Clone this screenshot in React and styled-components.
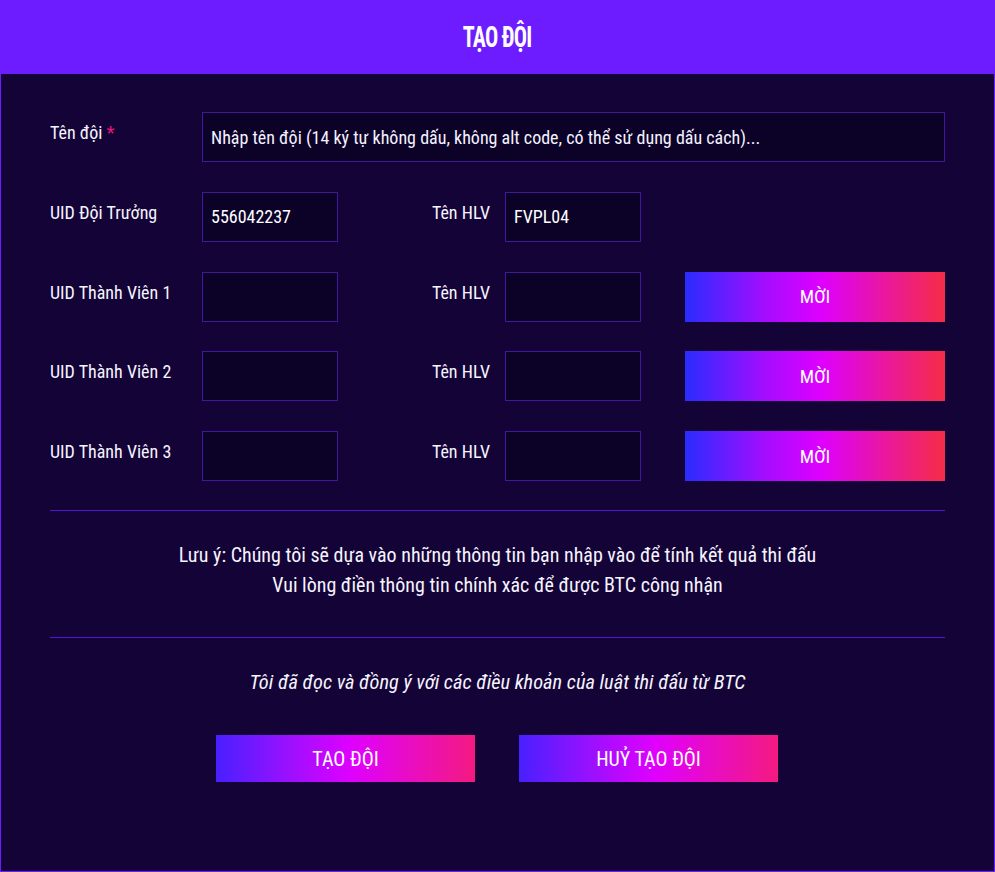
import React from 'react'
import styled, { createGlobalStyle } from 'styled-components'

const GlobalStyle = createGlobalStyle`
  html, body {
    margin: 0;
    padding: 0;
    background: #140336;
  }
  * {
    box-sizing: border-box;
  }
`

const Page = styled.div`
  width: 995px;
  height: 872px;
  border: 1px solid #6c1cff;
  border-top: none;
  background: #140336;
  font-family: "Roboto Condensed", Roboto, "Liberation Sans", sans-serif;
  color: #f6f4ff;
  display: flex;
  flex-direction: column;
`

const Header = styled.header`
  height: 74px;
  margin: 0 -1px;
  background: #6c1cff;
  display: flex;
  align-items: center;
  justify-content: center;
`

const Title = styled.h1`
  margin: 0;
  font-size: 29px;
  font-weight: 700;
  letter-spacing: -1px;
  color: #fff;
  transform: scaleX(0.76);
`

const Form = styled.div`
  padding: 38px 49px 0;
`

const Grid = styled.div`
  display: grid;
  grid-template-columns: 152px 136px 167px 136px 44px 260px;
  grid-auto-rows: 50px;
  row-gap: 29.75px;
`

const Label = styled.label`
  font-size: 18px;
  padding-top: 10px;
  white-space: nowrap;
  justify-self: ${p => (p.$right ? 'end' : 'start')};
  padding-right: ${p => (p.$right ? '15px' : '0')};

  span {
    color: #ec1482;
  }
`

const Input = styled.input`
  grid-column: ${p => p.$span || 'auto'};
  height: 50px;
  width: 100%;
  background: #0c0228;
  border: 1px solid #41179f;
  padding: 0 8px;
  font-family: inherit;
  font-size: 18px;
  color: #fff;
  outline: none;

  &::placeholder {
    color: #f4f2ff;
    opacity: 1;
  }
`

const Invite = styled.button`
  grid-column: 6;
  height: 50px;
  border: none;
  background: linear-gradient(90deg, #2a2cff 0%, #a80cff 32%, #dd00ff 52%, #f52d45 100%);
  font-family: inherit;
  font-size: 19px;
  color: #fff;
  cursor: pointer;
`

const Divider = styled.hr`
  margin: 0;
  border: none;
  border-top: 1px solid #5214d2;
`

const Notice = styled.div`
  padding: 29px 0 37px;
  text-align: center;
  font-size: 20px;
  line-height: 30px;
`

const Agree = styled.p`
  margin: 32px 0 0;
  text-align: center;
  font-size: 20.4px;
  line-height: 24px;
  font-style: italic;
`

const Actions = styled.div`
  display: flex;
  justify-content: center;
  gap: 44px;
  margin: 41px 0 0 -1px;
`

const ActionButton = styled.button`
  width: 259px;
  height: 47px;
  border: none;
  background: linear-gradient(90deg, #4820ff 0%, #9b10ff 28%, #df00ff 52%, #f41a80 100%);
  font-family: inherit;
  font-size: 20px;
  color: #fff;
  cursor: pointer;
`

const Spacer = styled.div`
  height: 29px;
`

const members = [1, 2, 3]

export default function App() {
  return (
    <>
      <GlobalStyle />
      <Page>
        <Header>
          <Title>TẠO ĐỘI</Title>
        </Header>
        <Form>
          <Grid>
            <Label>
              Tên đội <span>*</span>
            </Label>
            <Input
              $span="2 / 7"
              placeholder="Nhập tên đội (14 ký tự không dấu, không alt code, có thể sử dụng dấu cách)..."
            />

            <Label>UID Đội Trưởng</Label>
            <Input defaultValue="556042237" />
            <Label $right>Tên HLV</Label>
            <Input defaultValue="FVPL04" />
            <div />
            <div />

            {members.map(n => (
              <React.Fragment key={n}>
                <Label>UID Thành Viên {n}</Label>
                <Input />
                <Label $right>Tên HLV</Label>
                <Input />
                <div />
                <Invite>MỜI</Invite>
              </React.Fragment>
            ))}
          </Grid>

          <Spacer />
          <Divider />
          <Notice>
            Lưu ý: Chúng tôi sẽ dựa vào những thông tin bạn nhập vào để tính kết quả thi đấu
            <br />
            Vui lòng điền thông tin chính xác để được BTC công nhận
          </Notice>
          <Divider />
          <Agree>Tôi đã đọc và đồng ý với các điều khoản của luật thi đấu từ BTC</Agree>
          <Actions>
            <ActionButton>TẠO ĐỘI</ActionButton>
            <ActionButton>HUỶ TẠO ĐỘI</ActionButton>
          </Actions>
        </Form>
      </Page>
    </>
  )
}
